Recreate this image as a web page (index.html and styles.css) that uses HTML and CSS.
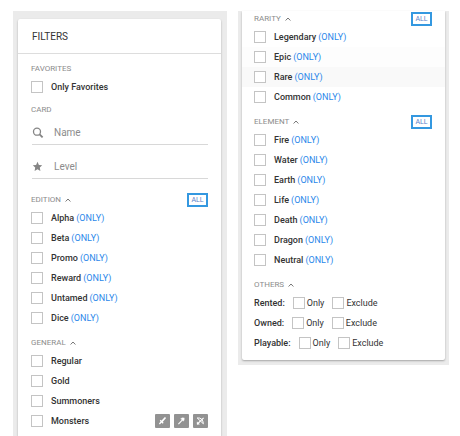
FILE: index.html
```
<!DOCTYPE html>
<html lang="en">
<head>
    <meta charset="UTF-8">
    <meta name="viewport" content="width=device-width, initial-scale=1.0">
    <title>Filters</title>
    <link rel="stylesheet" href="styles.css">
</head>
<body>

<!-- Left column -->
<div class="column column-main">
    <div class="panel">
        <h1 class="panel-title">FILTERS</h1>

        <section class="group">
            <h2 class="group-title">FAVORITES</h2>
            <div class="row"><input type="checkbox" id="favorites"><label for="favorites">Only Favorites</label></div>
        </section>

        <section class="group group-card">
            <h2 class="group-title">CARD</h2>
            <div class="field">
                <svg class="field-icon" viewBox="0 0 12 12"><circle cx="5" cy="4.7" r="3.5" fill="none" stroke="#858585" stroke-width="1.3"/><path d="M7.6 7.3 L10.6 10.3" stroke="#858585" stroke-width="1.8"/></svg>
                <input type="text" placeholder="Name" aria-label="Name">
            </div>
            <div class="field">
                <svg class="field-icon" viewBox="0 0 12 12"><path d="M5.5 0.8 L6.9 4 L10.2 4.3 L7.8 6.6 L8.4 9.9 L5.5 8.3 L2.6 9.9 L3.2 6.6 L0.8 4.3 L4.1 4 Z" fill="#858585"/></svg>
                <input type="text" placeholder="Level" aria-label="Level">
            </div>
        </section>

        <section class="group">
            <h2 class="group-title">EDITION <svg class="caret" viewBox="0 0 6 4"><path d="M0.6 3.5 L3 1 L5.4 3.5"/></svg><button class="all-button">ALL</button></h2>
            <div class="row"><input type="checkbox" id="alpha"><label for="alpha">Alpha</label><a href="#">(ONLY)</a></div>
            <div class="row"><input type="checkbox" id="beta"><label for="beta">Beta</label><a href="#">(ONLY)</a></div>
            <div class="row"><input type="checkbox" id="promo"><label for="promo">Promo</label><a href="#">(ONLY)</a></div>
            <div class="row"><input type="checkbox" id="reward"><label for="reward">Reward</label><a href="#">(ONLY)</a></div>
            <div class="row"><input type="checkbox" id="untamed"><label for="untamed">Untamed</label><a href="#">(ONLY)</a></div>
            <div class="row"><input type="checkbox" id="dice"><label for="dice">Dice</label><a href="#">(ONLY)</a></div>
        </section>

        <section class="group">
            <h2 class="group-title">GENERAL <svg class="caret" viewBox="0 0 6 4"><path d="M0.6 3.5 L3 1 L5.4 3.5"/></svg></h2>
            <div class="row"><input type="checkbox" id="regular"><label for="regular">Regular</label></div>
            <div class="row"><input type="checkbox" id="gold"><label for="gold">Gold</label></div>
            <div class="row"><input type="checkbox" id="summoners"><label for="summoners">Summoners</label></div>
            <div class="row">
                <input type="checkbox" id="monsters"><label for="monsters">Monsters</label>
                <div class="attack-types">
                    <!-- sword -->
                    <button class="attack" aria-label="Melee"><svg viewBox="0 0 15 14"><path d="M10.5 3.5 L6.8 7.6" stroke-width="1.7"/><path d="M5.2 6.2 L8.2 9.2 M6.4 7.8 L4.4 10" stroke-width="1.3"/></svg></button>
                    <!-- staff -->
                    <button class="attack" aria-label="Magic"><svg viewBox="0 0 15 14"><path d="M4.4 10.2 L8.5 5.8" stroke-width="1.1"/><path d="M6.6 4.7 L8.3 3.8 L10.3 3.9 L10.2 6 L9.2 7.3 L8.3 6 Z" fill="#fff" stroke-width="0.3"/></svg></button>
                    <!-- bow -->
                    <button class="attack" aria-label="Ranged"><svg viewBox="0 0 15 14"><path d="M4.2 4 Q9.8 3.2 10.4 9.8 M4.2 4 L10.4 9.8" stroke-width="1"/><path d="M4.4 10 L10.6 3.8" stroke-width="1.1"/><path d="M4 7.8 L6.6 10.2 L4 10.4 Z" fill="#fff" stroke-width="0.3"/></svg></button>
                </div>
            </div>
        </section>
    </div>
</div>

<!-- Right column -->
<div class="column column-more">
    <div class="panel">
        <section class="group">
            <h2 class="group-title">RARITY <svg class="caret" viewBox="0 0 6 4"><path d="M0.6 3.5 L3 1 L5.4 3.5"/></svg><button class="all-button">ALL</button></h2>
            <div class="row"><input type="checkbox" id="legendary"><label for="legendary">Legendary</label><a href="#">(ONLY)</a></div>
            <div class="row row-fading"><input type="checkbox" id="epic"><label for="epic">Epic</label><a href="#">(ONLY)</a></div>
            <div class="row row-active"><input type="checkbox" id="rare"><label for="rare">Rare</label><a href="#">(ONLY)</a></div>
            <div class="row"><input type="checkbox" id="common"><label for="common">Common</label><a href="#">(ONLY)</a></div>
        </section>

        <section class="group">
            <h2 class="group-title">ELEMENT <svg class="caret" viewBox="0 0 6 4"><path d="M0.6 3.5 L3 1 L5.4 3.5"/></svg><button class="all-button">ALL</button></h2>
            <div class="row"><input type="checkbox" id="fire"><label for="fire">Fire</label><a href="#">(ONLY)</a></div>
            <div class="row"><input type="checkbox" id="water"><label for="water">Water</label><a href="#">(ONLY)</a></div>
            <div class="row"><input type="checkbox" id="earth"><label for="earth">Earth</label><a href="#">(ONLY)</a></div>
            <div class="row"><input type="checkbox" id="life"><label for="life">Life</label><a href="#">(ONLY)</a></div>
            <div class="row"><input type="checkbox" id="death"><label for="death">Death</label><a href="#">(ONLY)</a></div>
            <div class="row"><input type="checkbox" id="dragon"><label for="dragon">Dragon</label><a href="#">(ONLY)</a></div>
            <div class="row"><input type="checkbox" id="neutral"><label for="neutral">Neutral</label><a href="#">(ONLY)</a></div>
        </section>

        <section class="group">
            <h2 class="group-title">OTHERS <svg class="caret" viewBox="0 0 6 4"><path d="M0.6 3.5 L3 1 L5.4 3.5"/></svg></h2>
            <div class="row row-options">
                <span class="option-name">Rented:</span>
                <span class="option"><input type="checkbox" id="rentedOnly"><label for="rentedOnly">Only</label></span>
                <span class="option"><input type="checkbox" id="rentedExclude"><label for="rentedExclude">Exclude</label></span>
            </div>
            <div class="row row-options">
                <span class="option-name">Owned:</span>
                <span class="option"><input type="checkbox" id="ownedOnly"><label for="ownedOnly">Only</label></span>
                <span class="option"><input type="checkbox" id="ownedExclude"><label for="ownedExclude">Exclude</label></span>
            </div>
            <div class="row row-options">
                <span class="option-name">Playable:</span>
                <span class="option"><input type="checkbox" id="playableOnly"><label for="playableOnly">Only</label></span>
                <span class="option"><input type="checkbox" id="playableExclude"><label for="playableExclude">Exclude</label></span>
            </div>
        </section>
    </div>
</div>

</body>
</html>
```
FILE: styles.css
```
* {
    box-sizing: border-box;
}

body {
    display: flex;
    align-items: flex-start;
    gap: 11px;
    min-height: 100vh;
    margin: 0;
    padding: 11px 11px 0 13px;
    background-color: #fff;
    color: #333;
    font-family: Roboto, "Liberation Sans", sans-serif;
    font-size: 9px;
    line-height: 12px;
}

/* Gray strips behind the two panels */
.column {
    display: flex;
    flex: 1;
    background-color: #ebebeb;
}

.column-main {
    align-self: stretch;
    padding: 8px 6px 0 5px;
}

.column-more {
    padding: 0 4px 5px;
}

.panel {
    flex: 1;
    background-color: #fff;
    border-radius: 2px;
    box-shadow: 0 1px 2px rgba(0, 0, 0, 0.3);
}

.column-main .panel {
    border-radius: 2px 2px 0 0;
}

.column-more .panel {
    padding-bottom: 7px;
    border-radius: 0 0 2px 2px;
}

.panel-title {
    margin: 0;
    padding: 12px 14px 10px;
    border-bottom: 1px solid #ddd;
    font-size: 10px;
    font-weight: 400;
}

/* Groups */
.group {
    padding-top: 7px;
}

.column-more .group:first-child {
    padding-top: 0;
}

.group-card {
    padding: 5px 0 6px;
}

.group-title {
    display: flex;
    align-items: center;
    height: 16px;
    margin: 0;
    padding: 0 13px;
    color: #8c8c8c;
    font-size: 8px;
    font-weight: 400;
}

.column-more .group-title,
.column-more .row {
    padding-left: 12px;
}

.caret {
    width: 6px;
    height: 4px;
    margin-left: 4px;
    fill: none;
    stroke: #777;
}

.all-button {
    width: 21px;
    height: 14px;
    margin-left: auto;
    padding: 0;
    border: 2px solid #3498e0;
    background-color: #fff;
    color: #5b7fc7;
    font-family: inherit;
    font-size: 7px;
    line-height: 10px;
    cursor: pointer;
}

/* Rows */
.row {
    display: flex;
    align-items: center;
    height: 20px;
    padding: 0 13px;
    font-weight: 500;
}

.row-fading {
    background-color: #fdfdfd;
}

.row-active {
    background-color: #f9f9f9;
}

input[type="checkbox"] {
    appearance: none;
    width: 12px;
    height: 12px;
    margin: 0 8px 0 0;
    border: 1px solid #c4c4c4;
    background-color: #fff;
}

input[type="checkbox"]:checked {
    background-color: #3498e0;
}

.row a {
    margin-left: 2px;
    color: #2b88ea;
    font-weight: 400;
    text-decoration: none;
}

.row-options {
    gap: 8px;
    font-weight: 400;
}

.option-name {
    font-weight: 500;
}

.option {
    display: flex;
    align-items: center;
}

.option input[type="checkbox"] {
    margin-right: 2px;
}

/* Search fields */
.field {
    display: flex;
    align-items: center;
    height: 24px;
    margin: 3px 13px 10px 14px;
    border-bottom: 1px solid #d8d8d8;
}

.field:last-child {
    margin-bottom: 0;
}

.field + .field {
    margin-top: 0;
}

.field-icon {
    width: 12px;
    height: 12px;
    margin-right: 10px;
}

.field input {
    flex: 1;
    min-width: 0;
    padding: 0;
    border: none;
    outline: none;
    background: none;
    color: #333;
    font-family: inherit;
    font-size: 10px;
}

.field input::placeholder {
    color: #8c8c8c;
}

/* Attack type buttons */
.attack-types {
    display: flex;
    gap: 4px;
    margin-left: auto;
}

.attack {
    display: flex;
    width: 15px;
    height: 14px;
    padding: 0;
    border: none;
    border-radius: 1px;
    background-color: #929292;
    cursor: pointer;
}

.attack svg {
    width: 15px;
    height: 14px;
    fill: none;
    stroke: #fff;
}
```
